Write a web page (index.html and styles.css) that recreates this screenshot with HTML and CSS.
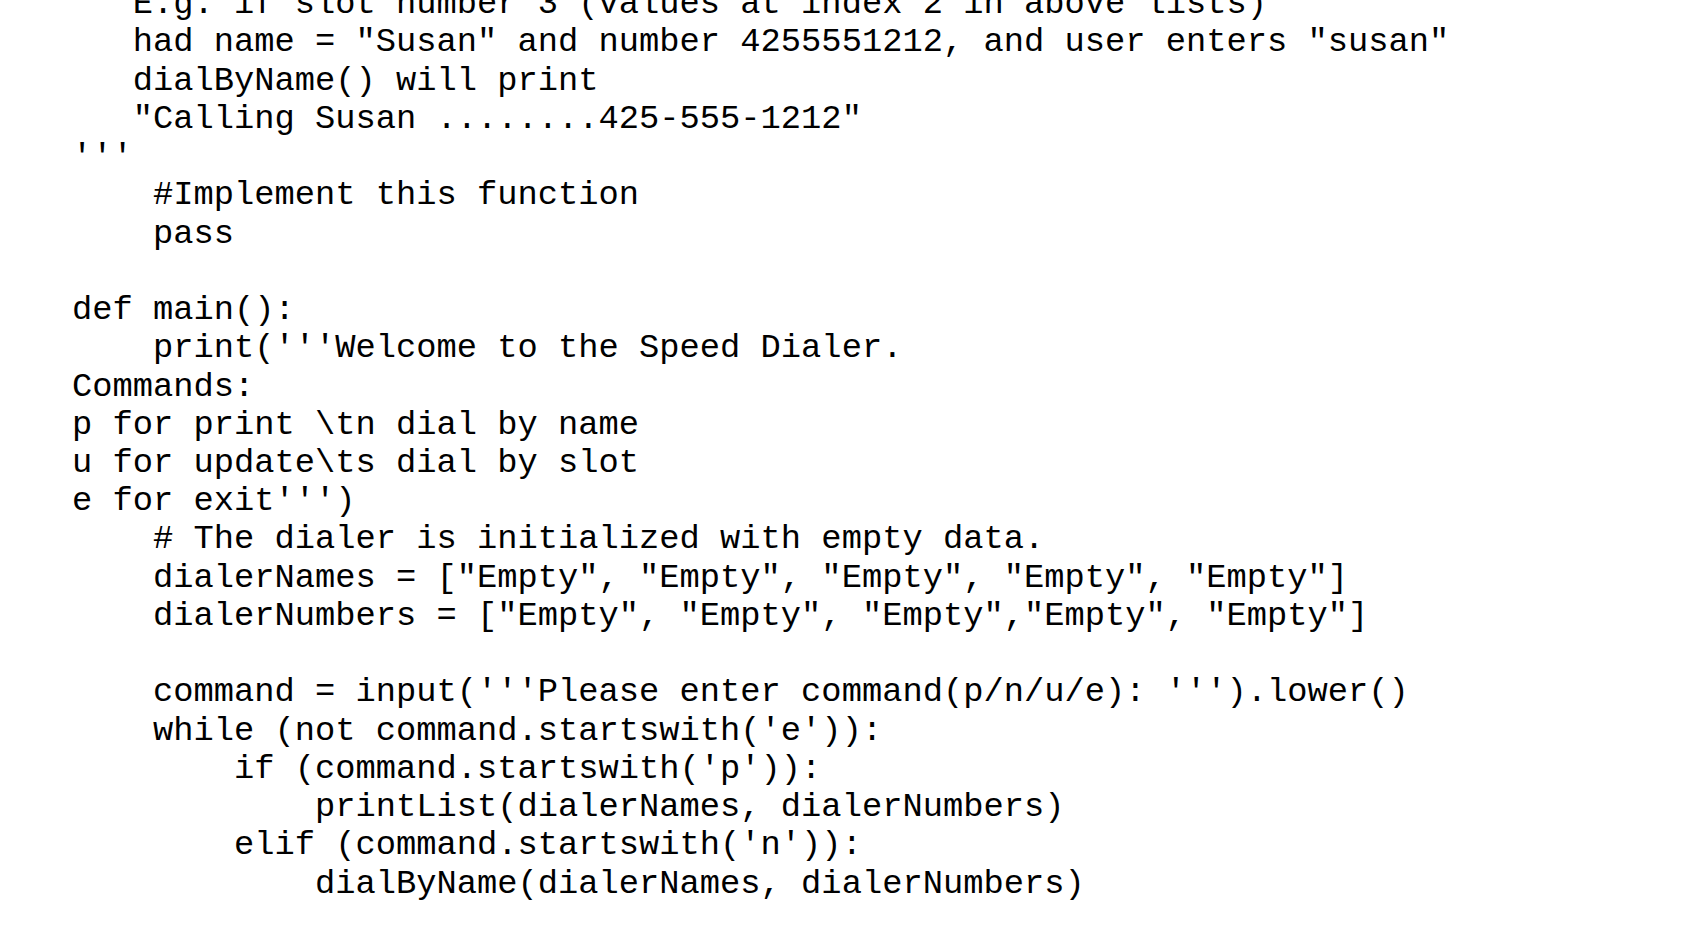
FILE: index.html
```html
<!DOCTYPE html>
<html lang="en">
<head>
<meta charset="utf-8">
<title>Speed Dialer</title>
<link rel="stylesheet" href="styles.css">
</head>
<body>
<pre class="code">   E.g. if slot number 3 (values at index 2 in above lists)
   had name = "Susan" and number 4255551212, and user enters "susan"
   dialByName() will print
   "Calling Susan ........425-555-1212"
'''
    #Implement this function
    pass

def main():
    print('''Welcome to the Speed Dialer.
Commands:
p for print \tn dial by name
u for update\ts dial by slot
e for exit''')
    # The dialer is initialized with empty data.
    dialerNames = ["Empty", "Empty", "Empty", "Empty", "Empty"]
    dialerNumbers = ["Empty", "Empty", "Empty","Empty", "Empty"]

    command = input('''Please enter command(p/n/u/e): ''').lower()
    while (not command.startswith('e')):
        if (command.startswith('p')):
            printList(dialerNames, dialerNumbers)
        elif (command.startswith('n')):
            dialByName(dialerNames, dialerNumbers)</pre>
</body>
</html>
```

FILE: styles.css
```css
html, body {
  margin: 0;
  padding: 0;
  background: #ffffff;
  overflow: hidden;
}

.code {
  margin: -14.8px 0 0 72px;
  padding: 0;
  font-family: "Liberation Mono", "DejaVu Sans Mono", monospace;
  font-size: 33.75px;
  line-height: 38.23px;
  color: #000000;
  white-space: pre;
}
```
